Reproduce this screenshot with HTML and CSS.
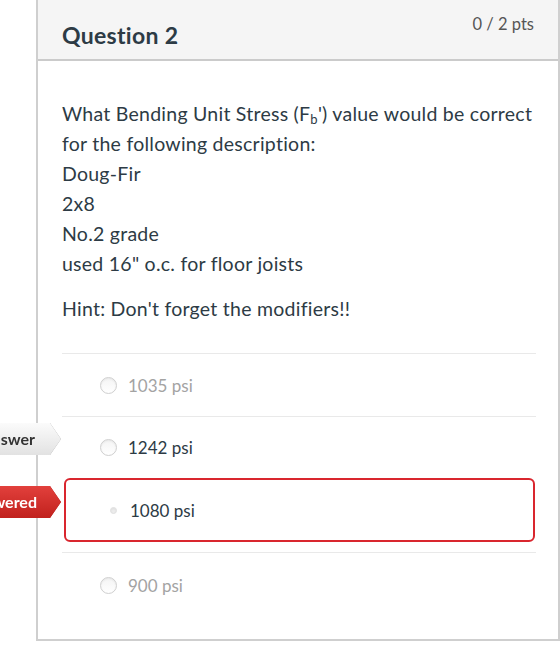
FILE: index.html
```html
<!DOCTYPE html>
<html lang="en">

<head>
    <meta charset="UTF-8">
    <meta name="viewport" content="width=device-width, initial-scale=1.0">
    <title>Question 2</title>
    <link rel="stylesheet" href="styles.css">
</head>

<body>
    <div class="question">
        <div class="question-header">
            <h2 class="question-title">Question 2</h2>
            <span class="question-points">0 / 2 pts</span>
        </div>

        <div class="question-body">
            <div class="question-text">
                <p>What Bending Unit Stress (F<sub>b</sub>') value would be correct for the following description:<br>
                    Doug-Fir<br>
                    2x8<br>
                    No.2 grade<br>
                    used 16" o.c. for floor joists</p>
                <p>Hint: Don't forget the modifiers!!</p>
            </div>

            <div class="answers">
                <div class="answer answer-muted">
                    <span class="radio"></span>
                    <span class="answer-label">1035 psi</span>
                </div>
                <div class="answer answer-correct">
                    <div class="tag tag-correct"><span class="tag-body">Correct Answer</span></div>
                    <span class="radio"></span>
                    <span class="answer-label">1242 psi</span>
                </div>
                <div class="answer answer-wrong">
                    <div class="tag tag-wrong"><span class="tag-body">You Answered</span></div>
                    <span class="radio radio-picked"></span>
                    <span class="answer-label">1080 psi</span>
                </div>
                <div class="answer answer-muted">
                    <span class="radio"></span>
                    <span class="answer-label">900 psi</span>
                </div>
            </div>
        </div>
    </div>
</body>

</html>
```

FILE: styles.css
```css
body {
    font-family: Lato, 'Open Sans', sans-serif;
    margin: 0;
    padding: 0;
    background-color: #fff;
    overflow: hidden;
    color: #2d3b45;
}

.question {
    width: 524px;
    margin-left: 36px;
    box-sizing: border-box;
    border: 2px solid #cfcfcf;
    border-top: none;
    background-color: #fff;
}

/* Header */
.question-header {
    display: flex;
    justify-content: space-between;
    align-items: flex-start;
    height: 61px;
    box-sizing: border-box;
    padding: 0 24px 0 24px;
    background-color: #f5f5f5;
    border-bottom: 2px solid #cbcbcb;
}

.question-title {
    margin: 21px 0 0 0;
    font-size: 23px;
    font-weight: 700;
    letter-spacing: 0.3px;
    line-height: 28px;
}

.question-points {
    margin-top: 14px;
    font-size: 16.5px;
    line-height: 20px;
    color: #555;
}

/* Body */
.question-body {
    padding: 38px 22px 22px 24px;
}

.question-text p {
    margin: 0 0 15px 0;
    font-size: 19.5px;
    letter-spacing: 0.25px;
    line-height: 30px;
}

.question-text sub {
    font-size: 13px;
    line-height: 0;
    vertical-align: -3px;
}

.answers {
    margin-top: 29px;
}

.answer {
    position: relative;
    display: flex;
    align-items: center;
    gap: 11px;
    height: 62px;
    padding-left: 38px;
    border-top: 1px solid #e9e9e9;
    font-size: 17px;
}

.answer-correct {
    height: 61px;
}

.answer-muted .answer-label {
    color: #a3a3a3;
}

.answer-wrong {
    height: 64px;
    box-sizing: border-box;
    margin: 0 1px 10px 2px;
    padding-left: 44px;
    gap: 13px;
    border: 2px solid #d9262e;
    border-radius: 6px;
}

.answer-wrong + .answer {
    height: 64px;
}

/* Radio buttons */
.radio {
    width: 15px;
    height: 15px;
    border-radius: 50%;
    border: 1px solid #cfcfcf;
    background: linear-gradient(#f4f4f4, #fff);
    box-shadow: inset 0 1px 2px rgba(0, 0, 0, 0.06);
}

.radio-picked {
    width: 5px;
    height: 5px;
    border-color: #e0e0e0;
    background: #ececec;
}

/* Answer tags */
.tag {
    position: absolute;
    top: 6px;
    right: calc(100% + 1px);
    filter: drop-shadow(0 0 0.6px #9a9a9a);
}

.tag-body {
    display: block;
    height: 32px;
    padding: 0 26px 0 12px;
    line-height: 31px;
    font-size: 16px;
    font-weight: 700;
    white-space: nowrap;
    clip-path: polygon(0 0, calc(100% - 11px) 0, 100% 50%, calc(100% - 11px) 100%, 0 100%);
}

.tag-correct .tag-body {
    color: #333;
    background: linear-gradient(#fbfbfb, #e2e2e2);
}

.tag-wrong {
    top: 6px;
    right: calc(100% + 5px);
    filter: drop-shadow(0 0 0.6px #a51d1d);
}

.tag-wrong .tag-body {
    color: #fff;
    padding-right: 24px;
    background: linear-gradient(#e2403c, #c1211d);
}
```
